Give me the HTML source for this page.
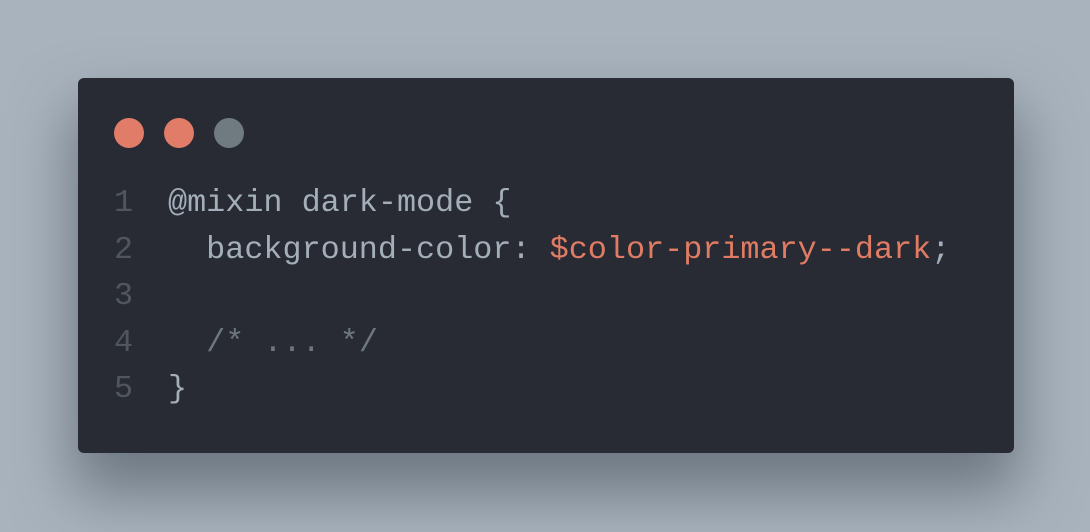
<!DOCTYPE html>
<html><head><style>
html,body{margin:0;padding:0;}
body{width:1090px;height:532px;background:#a9b3bd;position:relative;overflow:hidden;}
.card{position:absolute;left:78px;top:78px;width:936px;height:375px;background:#282b34;border-radius:6px;box-shadow:0 35px 60px 5px rgba(70,80,90,0.6);}
.dot{position:absolute;top:40px;width:30px;height:30px;border-radius:50%;}
.code{position:absolute;left:0;top:102px;font-family:"Liberation Mono",monospace;font-size:31.8px;line-height:46.6px;color:#a3aeb9;white-space:pre;}
.ln{display:inline-block;width:90px;padding-left:36px;box-sizing:border-box;color:#50565f;}
.o{color:#e07c64;}
.c{color:#6e7780;}
</style></head><body>
<div class="card">
<div class="dot" style="left:36px;background:#e07c68"></div>
<div class="dot" style="left:86px;background:#e07c68"></div>
<div class="dot" style="left:136px;background:#6f7b80"></div>
<div class="code"><div><span class="ln">1</span>@mixin dark-mode {</div><div><span class="ln">2</span>  background-color: <span class="o">$color-primary--dark</span>;</div><div><span class="ln">3</span></div><div><span class="ln">4</span>  <span class="c">/* ... */</span></div><div><span class="ln">5</span>}</div></div>
</div>
</body></html>
